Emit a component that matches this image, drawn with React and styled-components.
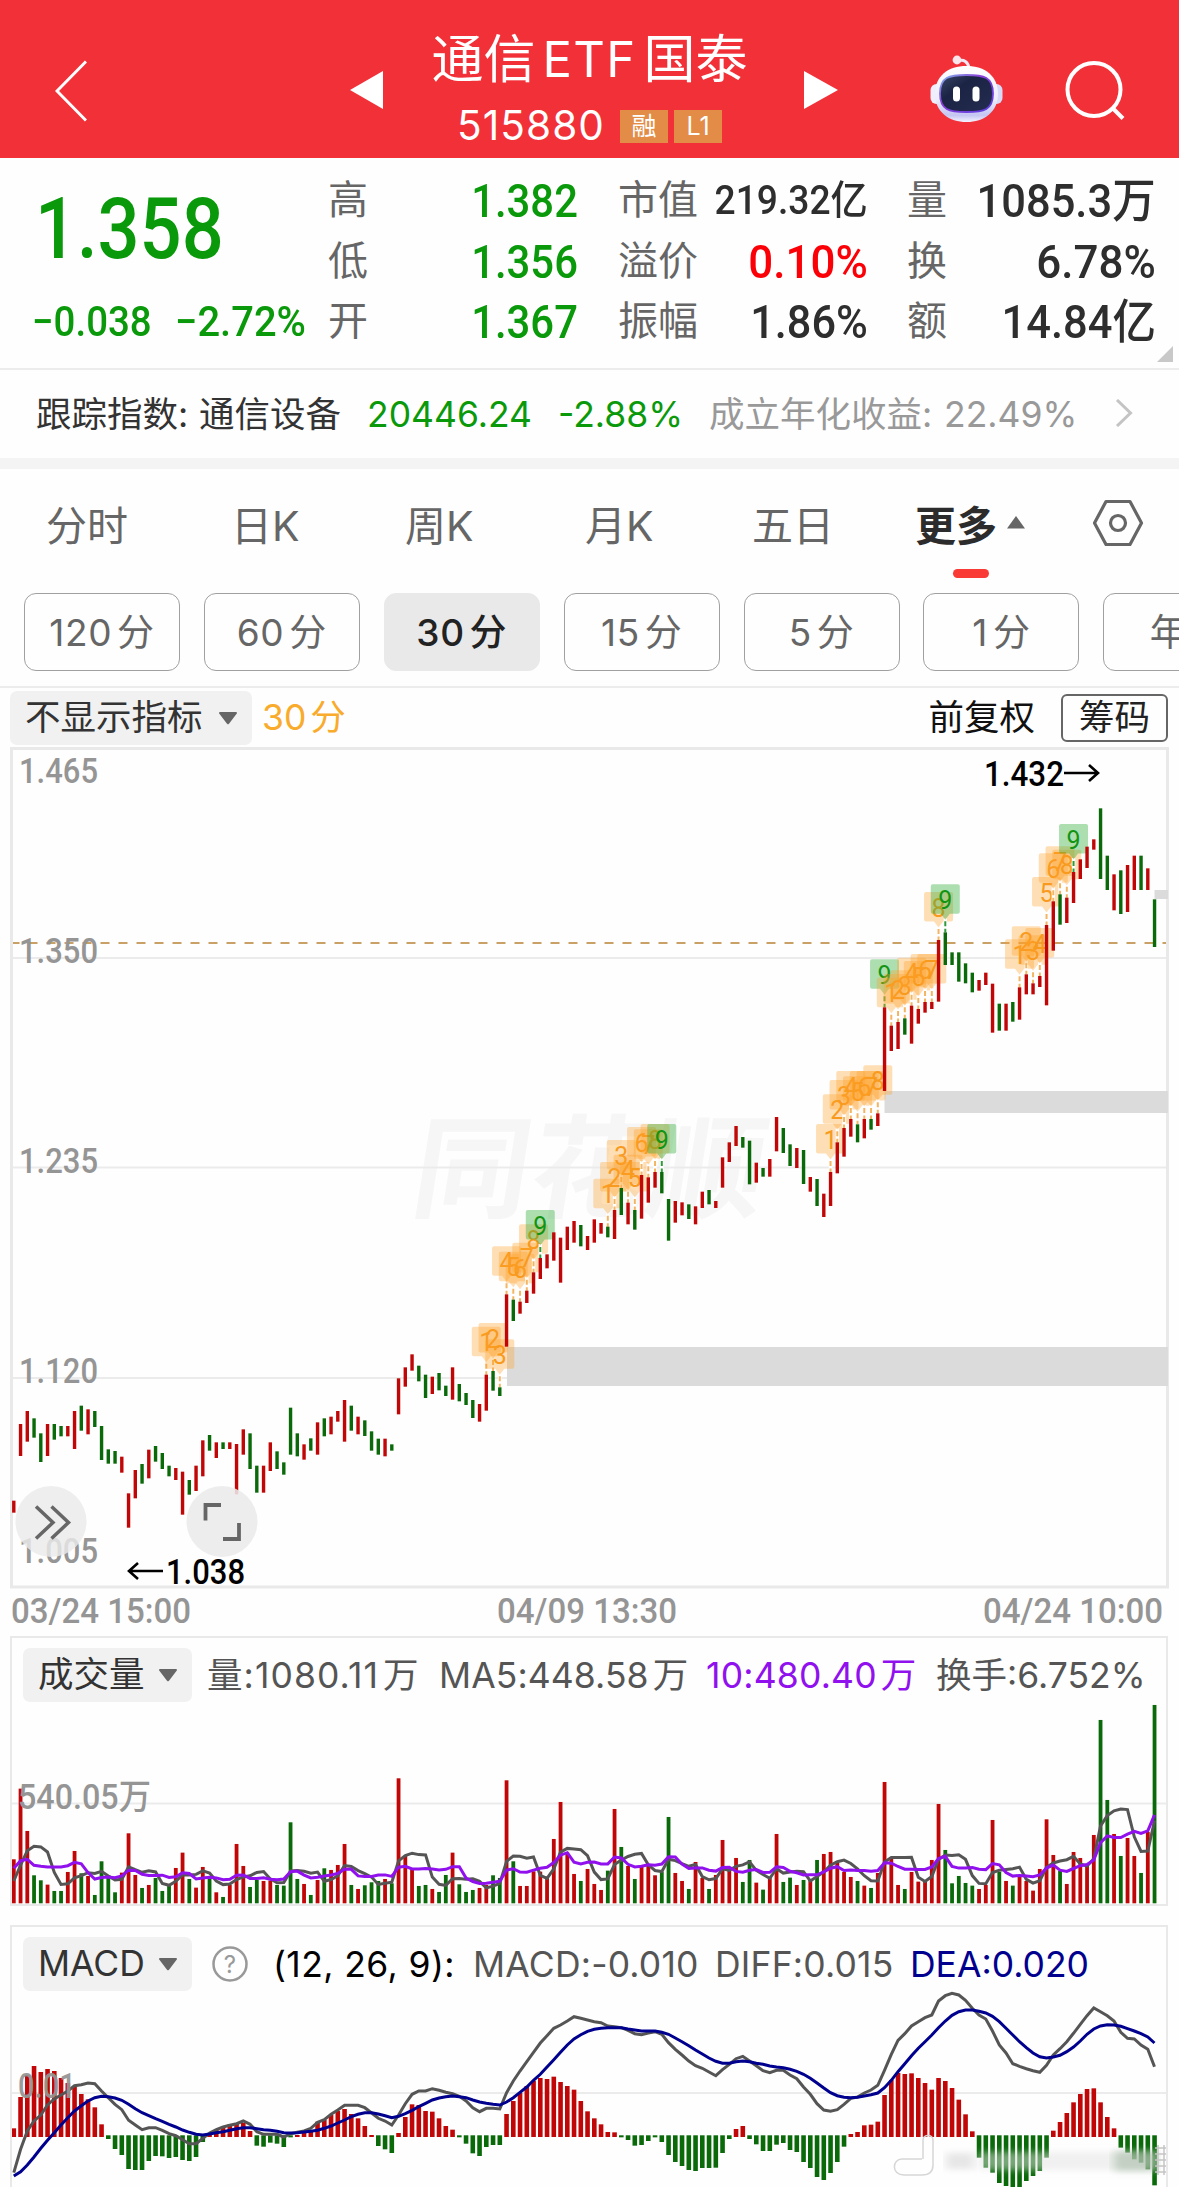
import React from 'react';
import styled, { createGlobalStyle } from 'styled-components';

const CJK = '"Noto Sans CJK SC", sans-serif';
const UI = `Inter, ${CJK}`;
const DIN = `Roboto, ${CJK}`;

const GlobalStyle = createGlobalStyle`
  * { box-sizing: border-box; }
  body { margin: 0; background: #fefefe; font-family: ${UI}; color: #333; }
  svg { display: block; flex: none; }
`;

/* ---------- data ---------- */

const STEP = 6.75;
const barX = (i) => 13.8 + i * STEP;

const CANDLES_EARLY = `
r962:998 r732:828 r693:785 g715:773 g760:846 r732:828 g732:779 g738:769 r738:769 r693:807
g677:752 r688:763 g693:741 g738:840 g808:851 g813:851 r830:878 r940:1043 r870:955 g852:911
r809:895 g798:845 g819:867 g857:889 r864:900 r875:1004 g900:944 r857:933 r781:889 g765:812
r787:834 g787:807 r787:807 r792:943 r748:824 g760:867 g857:938 r857:938 r787:873 g814:867
g847:884 g683:824 g760:829 r793:839 g775:812 r727:824 g715:769 r710:763 r693:725 r660:785
g677:752 r710:763 g721:768 g754:812 g776:824 r776:829 g793:812 r595:703 r562:620 r523:572
g557:604 g584:654 r590:642 g579:631 g617:648 r562:659 g612:664 g639:675 g660:714 r672:725
r584:692 g573:632 g622:648 r343:500 g359:423 r365:401 r332:369 r277:341 r234:297 r223:265
r157:242 r173:308 r140:210 r123:188 g135:199 r168:210 r118:188 r129:161 g140:172 r90:177
g24:105 r68:133 g90:149 r-15:116 r-8:68 r-24:23 g-24:40 g57:182 r63:128 r67:106
g73:117 r79:133 r35:84 g30:73 r63:84`;

const CANDLES_LATE = `
r1252:1343 r1207:1266 r1158:1218 g1191:1223 g1202:1333 r1268:1328 g1284:1310 r1257:1310 r1131:1234
g1164:1239 g1213:1278 r1224:1284 g1230:1332 r1311:1355 g1317:1398 r1361:1431 r1296:1398 r1207:1300
r1164:1250 r1137:1190 g1153:1207 r1137:1195 g1137:1169 r1120:1158 r802:1053 r857:933 r846:927
g835:884 r797:911 r807:851 r786:818 r786:807 r600:785 g577:675 g637:675 g637:725 g670:730 g698:757
r720:752 r698:735 r731:878 g791:872 r791:872 g786:845 r742:839 r703:763 r730:763 r708:741 r555:796
r484:632 g463:554 r473:549 r396:489 r358:417 r320:384 r298:329 g205:417 g347:450 r403:511 g391:522
r375:516 r347:450 g347:450 r385:450 g478:621`;

const parseCandles = (text, base) =>
  text.trim().split(/\s+/).map((t) => {
    const [hi, lo] = t.slice(1).split(':').map(Number);
    return { up: t[0] === 'r', top: base + hi / 3, bottom: base + lo / 3 };
  });

const candles = [...parseCandles(CANDLES_EARLY, 1180), ...parseCandles(CANDLES_LATE, 740)];

const SEQUENCE_STARTS = [70, 88, 121, 130, 149];

const VOLUMES = `
r718 r506 r633 g766 g781 r794 g813 g813 r756 r693 g760 r768 g825 g724 g765 g817 r758 r640 r765 g804
r795 g774 g813 g794 r744 r698 g777 r803 r741 g777 r817 g831 r795 r672 r738 g801 g780 r783 r782 g795
g797 g607 g777 r792 g825 r780 g745 r750 r735 r672 g795 r807 g796 g787 g783 r777 g790 r475 r708 r748
g798 g795 r807 g816 g765 r698 g793 g816 g810 r804 r795 g766 g774 r481 g724 r798 r798 r754 r755 r770
r657 r546 r698 r762 g783 r747 r792 r810 g752 r567 g681 r738 g777 r738 r738 r766 g755 g591 r759 r783
g807 r726 r774 g807 r765 r660 r748 r714 g786 g720 r788 g809 r772 r642 g786 g773 r795 g780 r780 g720
r702 r696 r728 r756 r771 g783 r797 g804 r759 r486 r717 r795 g807 r756 r785 r780 r720 r552 g690 g790
g768 g789 g797 r807 r795 r600 g756 r783 g797 r771 r783 r812 r747 r598 r705 g753 r792 r696 r714 r735
r645 g300 g540 r642 g708 r654 r708 g759 r636 g255`;

const volumes = VOLUMES.trim().split(/\s+/).map((t) => ({ up: t[0] === 'r', v: 850 - Number(t.slice(1)) }));

const movingAverage = (n, lead) =>
  volumes.map((_, i) =>
    i < lead.length ? lead[i] : 850 - volumes.slice(i - n + 1, i + 1).reduce((s, b) => s + b.v, 0) / n
  );

const ma5 = movingAverage(5, [783, 735, 692, 679]);
const ma10 = movingAverage(10, [745, 722, 718, 736, 739, 741, 741, 741, 737]);

const HISTOGRAM = `
652 558 492 465 483 474 480 501 516 525 549 565 589 640 684 714 732 774 777 777 750 735 736 741 738 747
750 738 693 669 657 648 640 638 636 660 704 707 695 698 708 679 672 660 657 632 627 612 600 594 609 622
645 672 705 715 726 666 618 580 582 600 602 622 645 656 679 698 727 735 708 702 702 609 570 546 525 510
501 504 497 513 525 536 570 601 622 640 663 664 679 687 704 702 690 679 693 732 753 765 777 780 771 771
770 726 684 654 645 684 700 720 720 701 696 717 723 753 771 798 807 786 753 707 669 663 643 641 632 552
507 486 489 487 501 516 536 501 510 531 566 610 661 740 770 785 816 825 831 828 810 795 780 740 659 633
606 574 549 534 532 574 618 652 710 725 745 755 775 823`.trim().split(/\s+/).map(Number);

const DIFF = `
785 715 660 630 612 582 564 552 540 524 521 516 518 540 560 580 596 628 642 656 650 650 658 668 674 686
698 698 682 666 656 648 643 638 630 640 662 670 670 670 678 668 664 660 652 634 626 610 597 583 583 583
590 606 622 630 642 612 578 550 540 540 533 538 544 548 556 570 590 602 592 592 594 545 510 480 452 424
396 374 352 342 330 317 322 327 332 335 345 347 350 358 368 371 366 362 370 395 415 432 450 464 472 483
494 476 460 443 436 450 464 479 485 478 478 492 503 528 550 578 597 601 596 580 562 558 546 537 523 478
430 388 368 345 332 320 312 270 254 247 252 268 292 312 324 360 402 426 458 466 473 479 484 463 432 413
392 367 340 314 291 302 314 330 364 382 384 402 415 467`.trim().split(/\s+/).map(Number);

const DEA = `
795 782 762 738 712 688 665 642 620 600 584 570 560 556 557 561 568 580 593 605 614 623 631 640 648 657
664 670 672 669 665 662 658 653 650 650 653 656 658 661 665 666 665 663 661 658 652 645 636 627 617 610
605 605 609 614 620 616 608 598 587 577 567 561 557 555 557 560 567 573 577 580 582 573 560 544 528 508
490 468 446 424 402 384 371 361 355 352 350 350 350 354 357 360 360 360 364 370 381 392 404 417 429 441
451 457 457 452 450 452 457 460 465 468 470 475 481 490 502 516 531 545 554 559 560 559 555 551 546 530
508 482 458 434 412 392 372 350 330 313 302 297 297 301 306 316 332 352 372 392 410 426 437 441 438 433
422 408 390 370 354 345 341 342 346 353 360 368 378 396`.trim().split(/\s+/).map(Number);

const toPoints = (values, base) =>
  values.map((v, i) => `${barX(i).toFixed(1)},${(base + v / 3).toFixed(1)}`).join(' ');

/* ---------- header ---------- */

const Page = styled.div`
  width: 1179px;
  height: 2187px;
  overflow: hidden;
  display: flex;
  flex-direction: column;
  background: #fefefe;
`;

const Header = styled.header`
  height: 158px;
  flex: none;
  background: #f23038;
  display: flex;
  align-items: flex-start;
  padding: 0 53px 0 55px;
  color: #fff;
`;

const HeaderSlot = styled.div`
  margin-left: ${(p) => p.$left || 0}px;
  margin-top: ${(p) => p.$top}px;
`;

const Title = styled.div`
  width: 420px;
  padding: 25px 9px 0 0;
  display: flex;
  flex-direction: column;
  align-items: center;
`;

const FundName = styled.div`
  font-size: 52px;
  line-height: 70px;
  height: 70px;
  display: flex;
  gap: 7px;
  white-space: nowrap;
`;

const Latin = styled.span`
  font-size: 49px;
  letter-spacing: 1.4px;
`;

const CodeRow = styled.div`
  display: flex;
  align-items: center;
  gap: 6px;
  height: 34px;
  margin-top: 14px;
`;

const Code = styled.span`
  font-size: 40.5px;
  line-height: 34px;
  letter-spacing: 1.1px;
  margin-right: 9px;
`;

const Tag = styled.span`
  width: 48px;
  height: 33px;
  background: #e28c48;
  font-size: 25px;
  line-height: 32px;
  text-align: center;
`;

/* ---------- quote ---------- */

const Quote = styled.section`
  height: 212px;
  flex: none;
  display: flex;
  border-bottom: 2px solid #ececec;
`;

const PriceBlock = styled.div`
  width: 328px;
  flex: none;
  padding-left: 32px;
  color: #0a990a;
  font-family: ${DIN};
  font-weight: 500;
`;

const Price = styled.div`
  font-size: 86px;
  line-height: 86px;
  margin: 28px 0 0 3px;
  height: 86px;
  transform: scaleX(0.86);
  transform-origin: left center;
`;

const ChangeRow = styled.div`
  display: flex;
  margin-top: 27px;
  font-size: 42px;
  line-height: 46px;
`;

const Change = styled.span`
  width: 143px;
  flex: none;
  white-space: nowrap;
  transform: scaleX(${(p) => p.$fit});
  transform-origin: left center;
`;

const StatColumn = styled.div`
  width: ${(p) => p.$w}px;
  flex: none;
  margin-right: ${(p) => p.$gap}px;
  padding-top: 13px;
  display: flex;
  flex-direction: column;
`;

const Stat = styled.div`
  height: 60.5px;
  display: flex;
  align-items: center;
  justify-content: space-between;
  white-space: nowrap;
`;

const StatLabel = styled.span`
  font-size: 40px;
  line-height: 56px;
  padding-bottom: 2px;
  color: #666;
`;

const StatValue = styled.span`
  font-family: ${DIN};
  font-weight: 500;
  font-size: ${(p) => p.$size || 47}px;
  line-height: 60px;
  height: 60px;
  color: ${(p) => p.$color || '#2e2e2e'};
  transform: scaleX(${(p) => p.$fit || 0.89});
  transform-origin: right center;
`;

const Corner = styled.svg`
  align-self: flex-end;
  margin: 0 0 6px 1px;
`;

/* ---------- index row ---------- */

const IndexRow = styled.section`
  height: 88px;
  flex: none;
  display: flex;
  align-items: baseline;
  padding: 19px 0 0 36px;
  font-size: 35.5px;
  line-height: 52px;
  white-space: nowrap;
  color: #333;
`;

const IndexCell = styled.span`
  width: ${(p) => p.$w}px;
  flex: none;
  color: ${(p) => p.$color || '#333'};
`;

const Band = styled.div`
  height: 11px;
  flex: none;
  background: #f4f4f4;
`;

/* ---------- tabs ---------- */

const Tabs = styled.nav`
  height: 124px;
  flex: none;
  display: flex;
  position: relative;
  padding: 24px 0 0 46px;
`;

const Tab = styled.div`
  width: ${(p) => p.$w}px;
  flex: none;
  height: 60px;
  display: flex;
  align-items: center;
  gap: 9px;
  font-size: 41px;
  color: ${(p) => (p.$active ? '#2c2c2c' : '#666')};
  font-weight: ${(p) => (p.$active ? 700 : 400)};
`;

const Underline = styled.div`
  position: absolute;
  left: 953px;
  top: 100px;
  width: 36px;
  height: 9px;
  border-radius: 4.5px;
  background: #fa3a34;
`;

const Periods = styled.div`
  height: 95px;
  flex: none;
  display: flex;
  gap: 23.9px;
  padding-left: 24px;
  overflow: hidden;
  border-bottom: 2px solid #ececec;
`;

const Period = styled.div`
  width: 156px;
  height: 78px;
  flex: none;
  display: flex;
  align-items: baseline;
  justify-content: center;
  gap: 5px;
  border-radius: 12px;
  border: 1.5px solid ${(p) => (p.$active ? '#e9e9e9' : '#a0a0a0')};
  background: ${(p) => (p.$active ? '#e9e9e9' : 'transparent')};
  color: ${(p) => (p.$active ? '#222' : '#666')};
  font-weight: ${(p) => (p.$active ? 500 : 400)};
  font-size: 37px;
  line-height: 78px;
  letter-spacing: 0.6px;
`;

/* ---------- charts ---------- */

const IndicatorBar = styled.div`
  height: 59px;
  flex: none;
  display: flex;
  align-items: center;
  padding: 0 11px 0 10px;
  font-size: 35.5px;
`;

const Pill = styled.div`
  width: ${(p) => p.$w}px;
  height: 54px;
  flex: none;
  display: flex;
  align-items: center;
  justify-content: space-between;
  padding: 0 14px 0 15px;
  border-radius: 7px;
  background: #f1f1f1;
  color: #333;
  font-size: 35.5px;
  line-height: 52px;
  white-space: nowrap;
`;

const PeriodNote = styled.span`
  display: flex;
  align-items: baseline;
  gap: 4px;
  margin-left: 10px;
  line-height: 52px;
  color: #f9ab2c;
`;

const Adjust = styled.span`
  margin-left: auto;
  margin-right: 26px;
  line-height: 50px;
  color: #111;
`;

const ChipButton = styled.span`
  width: 107px;
  height: 48px;
  border: 2px solid #666;
  border-radius: 6px;
  line-height: 44px;
  text-align: center;
  color: #222;
`;

const PriceChart = styled.div`
  height: 842px;
  flex: none;
`;

const TimeAxis = styled.div`
  height: 47px;
  flex: none;
`;

const Panel = styled.section`
  position: relative;
  height: ${(p) => p.$h}px;
  margin: 0 11px ${(p) => (p.$open ? 0 : 19)}px 10px;
  flex: none;
  border: 2px solid #e9e9e9;
  border-bottom-width: ${(p) => (p.$open ? 0 : 2)}px;
  overflow: hidden;
`;

const PanelHead = styled.div`
  display: flex;
  align-items: center;
  height: 54px;
  margin: 10px 0 0 11px;
  white-space: nowrap;
`;

const Readout = styled.span`
  width: ${(p) => p.$w}px;
  flex: none;
  display: flex;
  align-items: baseline;
  gap: 4px;
  margin-left: ${(p) => p.$left || 0}px;
  padding-top: 2px;
  font-size: 35.5px;
  line-height: 50px;
  letter-spacing: ${(p) => p.$track || 0}px;
  color: ${(p) => p.$color || '#555'};
`;

const HelpIcon = styled.svg`
  margin: 0 25px 0 20px;
`;

const PanelCanvas = styled.svg`
  position: absolute;
  left: -12px;
  top: -2px;
`;

const AxisText = styled.text`
  font-family: ${DIN};
  font-weight: 500;
  font-size: 35.5px;
  fill: ${(p) => p.$fill || '#959595'};
`;

const Watermark = styled.text`
  font-family: ${CJK};
  font-weight: 700;
  font-size: 112px;
  fill: #f6f6f6;
`;

const MarkerText = styled.text`
  font-family: ${DIN};
  font-weight: 400;
  font-size: 25px;
  text-anchor: middle;
`;

const RED = '#c00606';
const GREEN = '#0a6a0a';

const CaretDown = () => (
  <svg width="20" height="14" viewBox="0 0 20 14">
    <path d="M2 1h16a1 1 0 0 1 .8 1.6l-7.6 10a1.5 1.5 0 0 1-2.4 0l-7.6-10A1 1 0 0 1 2 1z" fill="#666" />
  </svg>
);

const Robot = () => (
  <svg width="74" height="68" viewBox="0 0 74 68">
    <defs>
      <linearGradient id="shell" x1="0" y1="0" x2="0" y2="1">
        <stop offset="0" stopColor="#ffffff" />
        <stop offset="0.6" stopColor="#ececfb" />
        <stop offset="0.88" stopColor="#c4c6f2" />
        <stop offset="1" stopColor="#f4f4ff" />
      </linearGradient>
      <linearGradient id="visorEdge" x1="0" y1="0" x2="1" y2="1">
        <stop offset="0" stopColor="#7fb4e8" />
        <stop offset="0.4" stopColor="#8a3fd8" />
        <stop offset="1" stopColor="#5a3fe0" />
      </linearGradient>
      <linearGradient id="visor" x1="0" y1="0" x2="1" y2="1">
        <stop offset="0" stopColor="#3a4568" />
        <stop offset="0.35" stopColor="#1b2444" />
        <stop offset="1" stopColor="#242c50" />
      </linearGradient>
    </defs>
    <path d="M28 6c6-2 10 1 11 7" fill="none" stroke="#f1e6f4" strokeWidth="3" strokeLinecap="round" />
    <circle cx="27" cy="5" r="4.4" fill="#fbe4ea" />
    <rect x="0.500" y="29" width="12" height="20" rx="6" fill="#eeeefc" />
    <rect x="60.500" y="29" width="12" height="20" rx="6" fill="#d8d9f6" />
    <path d="M36.500 11C55 11 68 21 68 39C68 57 54 67 36.500 67S5 57 5 39C5 21 18 11 36.500 11z" fill="url(#shell)" />
    <path d="M36.500 20C54 20 63 22 63 38.500S54 57 36.500 57S10 55 10 38.500S19 20 36.500 20z" fill="url(#visor)" stroke="url(#visorEdge)" strokeWidth="1.800" />
    <rect x="23" y="31.500" width="7" height="15" rx="3.500" fill="#fff" />
    <rect x="42.500" y="31.500" width="7" height="15" rx="3.500" fill="#fff" />
  </svg>
);

const Marker = ({ index, digit }) => {
  const x = barX(index);
  const { top } = candles[index];
  const nine = digit === 9;
  const fill = nine ? 'rgba(40,170,50,0.38)' : 'rgba(255,160,40,0.34)';
  const ink = nine ? '#129412' : '#f79a1e';
  return (
    <g>
      <line x1={x} x2={x} y1={top - 14} y2={top} stroke="#fff" strokeWidth="3.400" />
      <line x1={x} x2={x} y1={top - 11} y2={top} stroke={nine ? '#2f9a3a' : '#f3b562'} strokeWidth="2" strokeDasharray="5 2.500" />
      <path
        d={`M${x - 12.5} ${top - 48}h25a2 2 0 0 1 2 2v25.500a2 2 0 0 1-2 2h-8l-4.500 6l-4.500-6h-8a2 2 0 0 1-2-2v-25.500a2 2 0 0 1 2-2z`}
        fill={fill}
      />
      <MarkerText x={x} y={top - 23.5} fill={ink}>{digit}</MarkerText>
    </g>
  );
};

const MARKERS = SEQUENCE_STARTS.flatMap((start) =>
  Array.from({ length: 9 }, (_, k) => ({ index: start + k, digit: 1 + k }))
);

const PriceCanvas = () => (
  <svg width="1179" height="842" viewBox="0 747 1179 842">
    <g transform="translate(418 1209) skewX(-9)">
      <Watermark x="-10" y="0" textLength="352" lengthAdjust="spacingAndGlyphs">同花顺</Watermark>
    </g>
    <g stroke="#ebebeb" strokeWidth="2">
      {[958, 1167.5, 1378].map((y) => <line key={y} x1="12" x2="1167" y1={y} y2={y} />)}
    </g>
    <line x1="10.500" x2="1169" y1="943" y2="943" stroke="#c9a066" strokeWidth="2" strokeDasharray="9 9" />
    <rect x="11.500" y="748.500" width="1156" height="838.500" fill="none" stroke="#e9e9e9" strokeWidth="3" />
    <rect x="507" y="1347" width="661" height="39" fill="#dbdbdb" />
    <rect x="884.500" y="1091" width="283.500" height="22" fill="#dbdbdb" />
    <rect x="1154.500" y="890" width="13.500" height="9" fill="#dbdbdb" />
    {MARKERS.map((m) => <Marker key={m.index} {...m} />)}
    {candles.map((c, i) => (
      <rect key={i} x={barX(i) - 1.7} y={c.top} width="3.400" height={c.bottom - c.top} fill={c.up ? RED : GREEN} />
    ))}
    {[['1.465', 783], ['1.350', 963], ['1.235', 1173], ['1.120', 1383], ['1.005', 1563]].map(([t, y]) => (
      <AxisText key={t} x="19" y={y} textLength="79" lengthAdjust="spacingAndGlyphs">{t}</AxisText>
    ))}
    <AxisText $fill="#000" x="984" y="786" textLength="80" lengthAdjust="spacingAndGlyphs">1.432</AxisText>
    <path d="M1064 773H1098M1089 765l9 8l-9 8" fill="none" stroke="#000" strokeWidth="2.600" />
    <AxisText $fill="#000" x="166" y="1583.500" textLength="79" lengthAdjust="spacingAndGlyphs">1.038</AxisText>
    <path d="M163 1571H129M138 1563l-9 8l9 8" fill="none" stroke="#000" strokeWidth="2.600" />
    <circle cx="51" cy="1521.500" r="35.500" fill="#eaeaea" fillOpacity="0.820" />
    <path d="M36 1506.500l17 16l-17 16M51.500 1506.500l17 16l-17 16" fill="none" stroke="#666" strokeWidth="3.500" />
    <circle cx="222" cy="1521.500" r="35.500" fill="#eaeaea" fillOpacity="0.880" />
    <path d="M205.500 1520.500V1505h15.500M239 1523v16h-16" fill="none" stroke="#666" strokeWidth="3.800" />
  </svg>
);

const VolumeCanvas = () => (
  <PanelCanvas width="1179" height="270" viewBox="0 1636 1179 270">
    <line x1="12" x2="1167" y1="1803.500" y2="1803.500" stroke="#ebebeb" strokeWidth="2" />
    {volumes.map((b, i) => (
      <rect key={i} x={barX(i) - 1.9} y={1903.3 - b.v / 3} width="3.800" height={b.v / 3} fill={b.up ? RED : GREEN} />
    ))}
    <polyline points={toPoints(ma5, 1620)} fill="none" stroke="#555" strokeWidth="3" />
    <polyline points={toPoints(ma10, 1620)} fill="none" stroke="#9010ee" strokeWidth="3" />
    <AxisText x="18" y="1809" textLength="133" lengthAdjust="spacingAndGlyphs">540.05万</AxisText>
  </PanelCanvas>
);

const MacdCanvas = () => (
  <PanelCanvas width="1179" height="263" viewBox="0 1924 1179 263">
    <defs>
      <filter id="soft" x="-10%" y="-60%" width="120%" height="220%">
        <feGaussianBlur stdDeviation="5 3" />
      </filter>
    </defs>
    <line x1="12" x2="1167" y1="2092" y2="2092" stroke="#ebebeb" strokeWidth="2" />
    {HISTOGRAM.map((v, i) => {
      const y = 1910 + v / 3;
      const up = v < 676;
      return (
        <rect
          key={i}
          x={barX(i) - 2.3}
          y={up ? y : 2134.3}
          width="4.600"
          height={up ? 2136 - y : y - 2134.3}
          fill={up ? RED : GREEN}
        />
      );
    })}
    <polyline points={toPoints(DIFF, 1910)} fill="none" stroke="#555" strokeWidth="3" />
    <polyline points={toPoints(DEA, 1910)} fill="none" stroke="#00008f" strokeWidth="3" />
    <AxisText x="18" y="2097" textLength="58" lengthAdjust="spacingAndGlyphs" fillOpacity="0.950">0.01</AxisText>
    <rect x="946" y="2152" width="28" height="16" fill="#e6e6e6" filter="url(#soft)" />
    <rect x="978" y="2151" width="180" height="18" fill="#e2e4e2" fillOpacity="0.500" filter="url(#soft)" />
    <rect x="1114" y="2150" width="42" height="20" fill="#9fb49f" fillOpacity="0.550" filter="url(#soft)" />
    <path
      d="M922 2158H902c-10 0-11 16 2 16h18c8 0 11-4 11-10v-25c0-6-10-6-10 0v19"
      fill="none"
      stroke="#d6d6d6"
      strokeWidth="1.500"
    />
    <g stroke="#c4c4c4" strokeWidth="1.500">
      {[2147, 2153, 2159, 2165, 2171].map((y) => <line key={y} x1="1155" x2="1168" y1={y} y2={y} />)}
      <line x1="1158" x2="1158" y1="2144" y2="2174" />
      <line x1="1164" x2="1164" y1="2144" y2="2174" />
    </g>
  </PanelCanvas>
);

const UP = '#fb0007';
const DOWN = '#0a990a';

const STAT_COLUMNS = [
  { w: 250, gap: 40, rows: [['高', '1.382', DOWN], ['低', '1.356', DOWN], ['开', '1.367', DOWN]] },
  { w: 250, gap: 39, rows: [['市值', '219.32亿', null, 40, 0.93], ['溢价', '0.10%', UP, 47, 0.935], ['振幅', '1.86%', null, 47, 0.92]] },
  { w: 249, gap: 0, rows: [['量', '1085.3万', null, 47, 0.925], ['换', '6.78%', null, 47, 0.935], ['额', '14.84亿', null, 47, 0.925]] },
];

const TABS = [
  ['分时', 185], ['日K', 174], ['周K', 180], ['月K', 167], ['五日', 163],
];

const PERIODS = ['120', '60', '30', '15', '5', '1'];

export default function App() {
  return (
    <Page>
      <GlobalStyle />
      <Header>
        <HeaderSlot $top={60}>
          <svg width="32" height="62" viewBox="0 0 32 62"><path d="M31 1.500L2 31l29 29.500" fill="none" stroke="#fff" strokeWidth="3" /></svg>
        </HeaderSlot>
        <HeaderSlot $top={71} $left={263}>
          <svg width="34" height="38" viewBox="0 0 34 38"><path d="M33 0v38L0 19z" fill="#fff" /></svg>
        </HeaderSlot>
        <Title>
          <FundName><span>通信</span><Latin>ETF</Latin><span>国泰</span></FundName>
          <CodeRow><Code>515880</Code><Tag>融</Tag><Tag>L1</Tag></CodeRow>
        </Title>
        <HeaderSlot $top={71}>
          <svg width="34" height="38" viewBox="0 0 34 38"><path d="M0 0v38L34 19z" fill="#fff" /></svg>
        </HeaderSlot>
        <HeaderSlot $top={55} $left={92}><Robot /></HeaderSlot>
        <HeaderSlot $top={60} $left={61}>
          <svg width="61" height="61" viewBox="0 0 61 61">
            <circle cx="29" cy="29.500" r="26.500" fill="none" stroke="#fff" strokeWidth="4" />
            <path d="M48 48.500L58 58.500" stroke="#fff" strokeWidth="4" />
          </svg>
        </HeaderSlot>
      </Header>

      <Quote>
        <PriceBlock>
          <Price>1.358</Price>
          <ChangeRow><Change $fit={0.915}>−0.038</Change><Change $fit={0.95}>−2.72%</Change></ChangeRow>
        </PriceBlock>
        {STAT_COLUMNS.map((col, i) => (
          <StatColumn key={i} $w={col.w} $gap={col.gap}>
            {col.rows.map(([label, value, color, size, fit]) => (
              <Stat key={label}>
                <StatLabel>{label}</StatLabel>
                <StatValue $color={color} $size={size} $fit={fit}>{value}</StatValue>
              </Stat>
            ))}
          </StatColumn>
        ))}
        <Corner width="16" height="16" viewBox="0 0 16 16"><path d="M16 0v16H0z" fill="#c8c8c8" /></Corner>
      </Quote>

      <IndexRow>
        <IndexCell $w={163}>跟踪指数:</IndexCell>
        <IndexCell $w={168}>通信设备</IndexCell>
        <IndexCell $w={191} $color={DOWN}>20446.24</IndexCell>
        <IndexCell $w={151} $color={DOWN}>-2.88%</IndexCell>
        <IndexCell $w={235} $color="#999">成立年化收益:</IndexCell>
        <IndexCell $w={171} $color="#999">22.49%</IndexCell>
        <svg width="18" height="28" viewBox="0 0 18 28"><path d="M2 1l13.500 13L2 27" fill="none" stroke="#c4c4c4" strokeWidth="3" /></svg>
      </IndexRow>
      <Band />

      <Tabs>
        {TABS.map(([label, w]) => <Tab key={label} $w={w}>{label}</Tab>)}
        <Tab $w={177} $active>
          更多
          <svg width="20" height="14" viewBox="0 0 20 14"><path d="M10 0l9 12.500H1z" fill="#666" /></svg>
        </Tab>
        <Tab $w={56}>
          <svg width="52" height="48" viewBox="0 0 52 48">
            <path d="M14 2.500h24L49.500 24L38 45.500H14L2.500 24z" fill="none" stroke="#666" strokeWidth="3.200" strokeLinejoin="round" />
            <circle cx="26" cy="24" r="7.500" fill="none" stroke="#666" strokeWidth="3.200" />
          </svg>
        </Tab>
        <Underline />
      </Tabs>
      <Periods>
        {PERIODS.map((n) => (
          <Period key={n} $active={n === '30'}><span>{n}</span><span>分</span></Period>
        ))}
        <Period>年K</Period>
      </Periods>

      <IndicatorBar>
        <Pill $w={242}>不显示指标<CaretDown /></Pill>
        <PeriodNote><span>30</span><span>分</span></PeriodNote>
        <Adjust>前复权</Adjust>
        <ChipButton>筹码</ChipButton>
      </IndicatorBar>

      <PriceChart><PriceCanvas /></PriceChart>
      <TimeAxis>
        <svg width="1179" height="47" viewBox="0 1589 1179 47">
          <AxisText x="11" y="1623" textLength="180" lengthAdjust="spacingAndGlyphs">03/24 15:00</AxisText>
          <AxisText x="497" y="1623" textLength="180" lengthAdjust="spacingAndGlyphs">04/09 13:30</AxisText>
          <AxisText x="983" y="1623" textLength="180" lengthAdjust="spacingAndGlyphs">04/24 10:00</AxisText>
        </svg>
      </TimeAxis>

      <Panel $h={270}>
        <VolumeCanvas />
        <PanelHead>
          <Pill $w={169}>成交量<CaretDown /></Pill>
          <Readout $w={232} $left={15} $track={1.1}><span>量:1080.11</span><span>万</span></Readout>
          <Readout $w={267} $track={0.1}><span>MA5:448.58</span><span>万</span></Readout>
          <Readout $w={230} $track={0.2} $color="#9010ee"><span>10:480.40</span><span>万</span></Readout>
          <Readout $w={215}>换手:6.752%</Readout>
        </PanelHead>
      </Panel>

      <Panel $h={263} $open>
        <MacdCanvas />
        <PanelHead>
          <Pill $w={169}>MACD<CaretDown /></Pill>
          <HelpIcon width="36" height="36" viewBox="0 0 36 36">
            <circle cx="18" cy="18" r="16.500" fill="none" stroke="#999" strokeWidth="2.500" />
            <text x="18" y="26.500" textAnchor="middle" fontSize="24" fill="#999">?</text>
          </HelpIcon>
          <Readout $w={200} $color="#000" $track={0.4}>(12, 26, 9):</Readout>
          <Readout $w={242} $track={0.2}>MACD:-0.010</Readout>
          <Readout $w={195} $track={0.2}>DIFF:0.015</Readout>
          <Readout $w={180} $color="#00008f">DEA:0.020</Readout>
        </PanelHead>
      </Panel>
    </Page>
  );
}
